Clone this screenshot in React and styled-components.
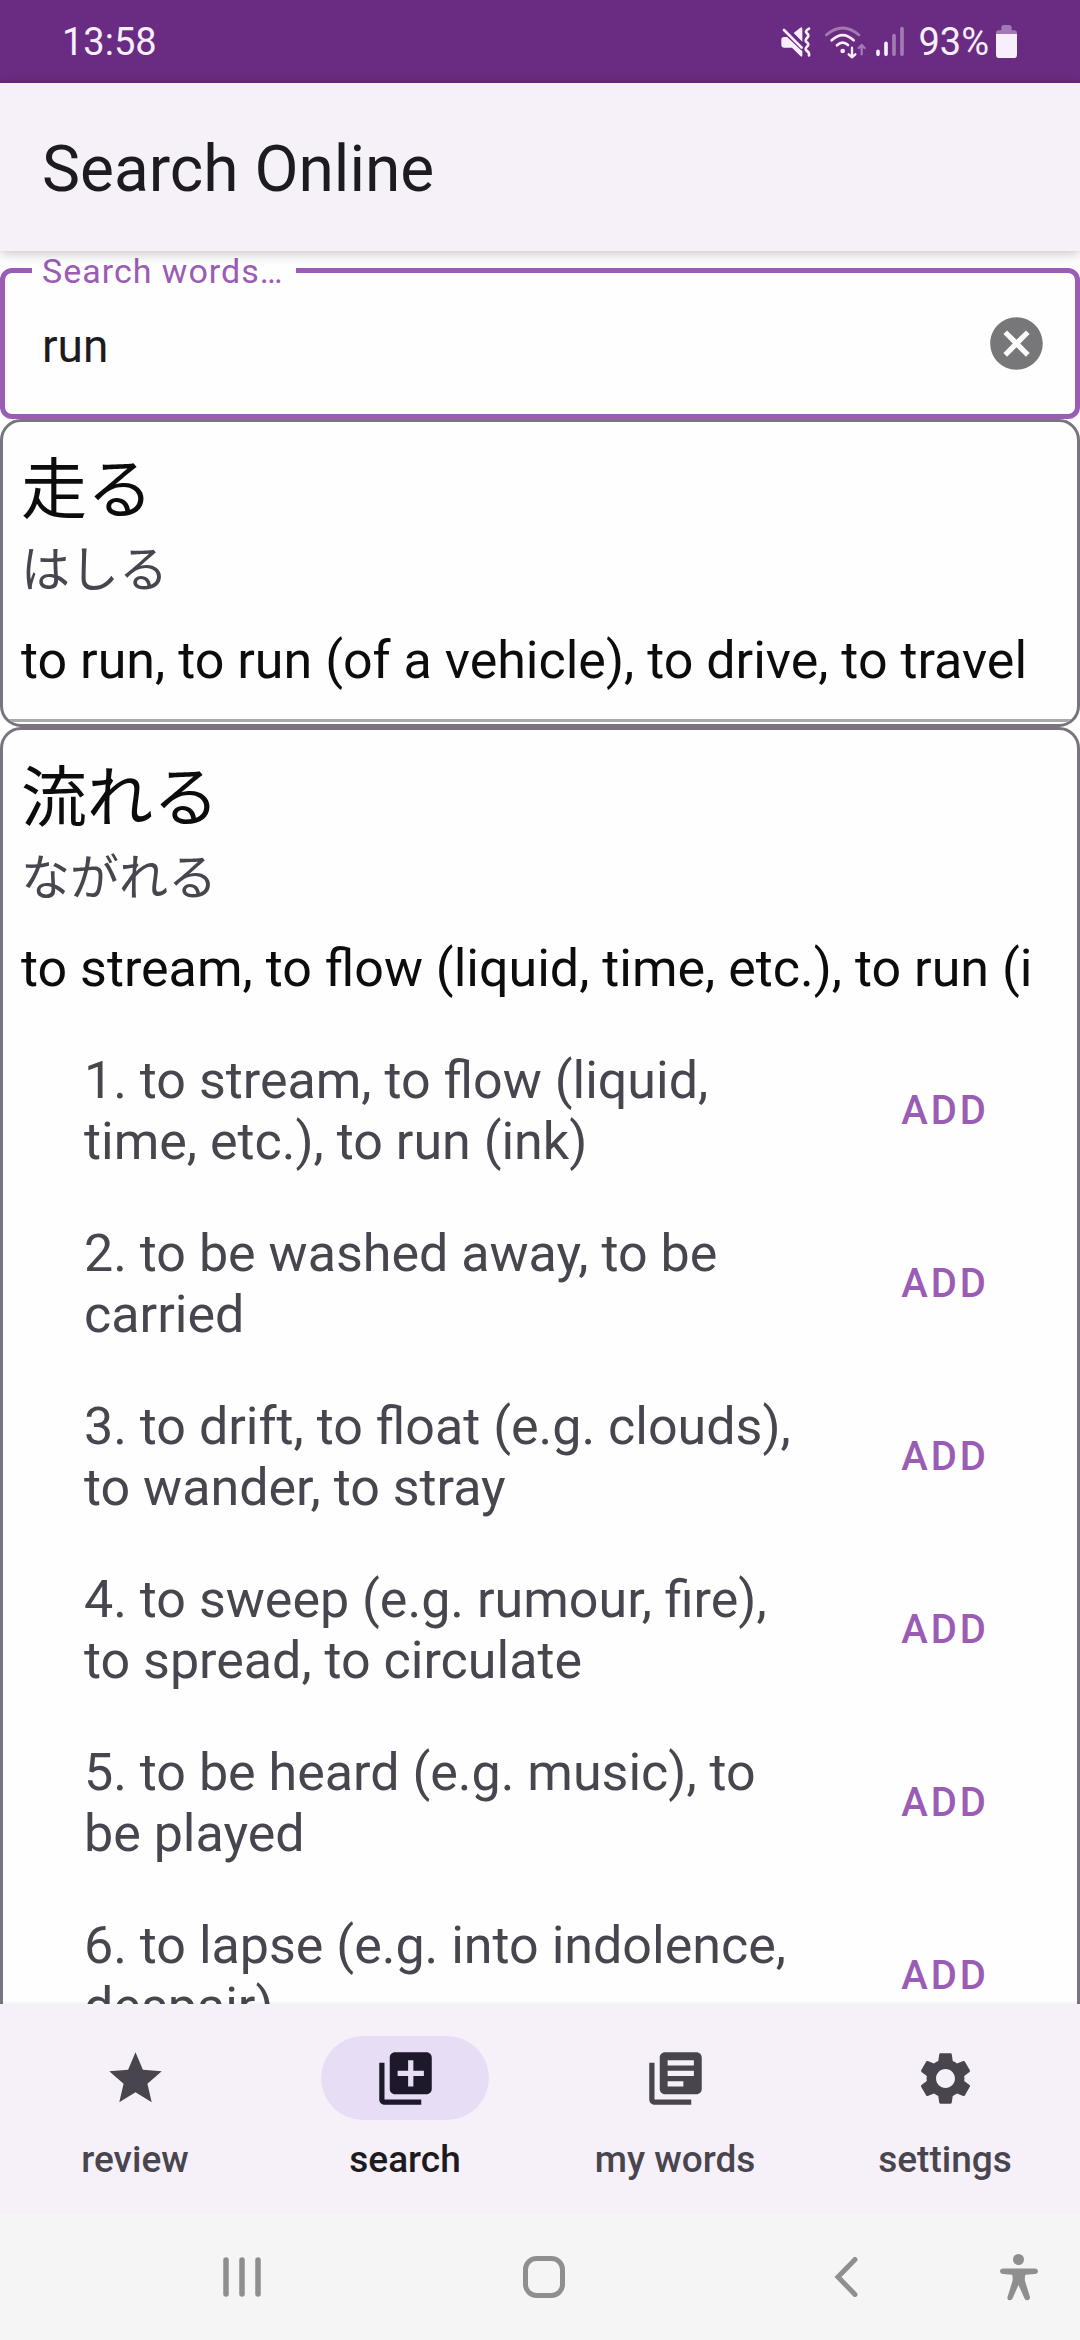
import React, { useState } from "react";
import styled, { createGlobalStyle } from "styled-components";
import {
  MdCancel,
  MdLibraryAdd,
  MdLibraryBooks,
  MdSettings,
  MdStar,
} from "react-icons/md";

const color = {
  status: "#6a2c82",
  statusText: "#f8eefc",
  accent: "#9a5cb4",
  bar: "#f6f1f9",
  pill: "#e7def6",
  pillIcon: "#1d192b",
  ink: "#1d1b20",
  word: "#0c0c0c",
  muted: "#49454f",
  outline: "#79747e",
  divider: "#a9a9a9",
  system: "#f5f5f5",
  systemIcon: "#8f8f8f",
};

const GlobalStyle = createGlobalStyle`
  *, *::before, *::after { box-sizing: border-box; }
  body {
    margin: 0;
    background: #fefefe;
    color: ${color.ink};
    font-family: Roboto, "Noto Sans CJK JP", sans-serif;
  }
  button, input { font: inherit; color: inherit; }
  button { border: 0; padding: 0; background: none; cursor: pointer; }
`;

const Screen = styled.div`
  display: flex;
  flex-direction: column;
  height: 100vh;
`;

const StatusBar = styled.div`
  flex: none;
  display: flex;
  align-items: center;
  justify-content: space-between;
  height: 83px;
  padding: 0 63px 0 62px;
  background: ${color.status};
  color: ${color.statusText};
  font-size: 38px;
  line-height: 48px;
`;

const StatusGroup = styled.div`
  display: flex;
  align-items: center;
  gap: ${(p) => p.$gap}px;
`;

const AppBar = styled.header`
  flex: none;
  position: relative;
  z-index: 1;
  display: flex;
  align-items: center;
  height: 168px;
  padding: 6px 42px 0;
  background: ${color.bar};
  box-shadow: 0 2px 12px rgba(0, 0, 0, 0.24);
`;

const Title = styled.h1`
  margin: 0;
  font-size: 64px;
  font-weight: 400;
  line-height: 76px;
`;

const Field = styled.fieldset`
  flex: none;
  min-width: 0;
  margin: 0;
  padding: 0 27px 16px;
  border: 5px solid ${color.accent};
  border-radius: 12px;
`;

const FieldLegend = styled.legend`
  padding: 2px 12px 0 10px;
  color: ${color.accent};
  font-size: 34px;
  line-height: 36px;
  letter-spacing: 1px;
`;

const FieldRow = styled.div`
  display: flex;
  align-items: center;
  height: 109px;
`;

const FieldInput = styled.input`
  flex: 1;
  min-width: 0;
  padding: 4px 10px 0;
  border: 0;
  outline: 0;
  background: none;
  font-size: 46px;
  line-height: 60px;
`;

const ClearButton = styled.button`
  display: flex;
  color: #777779;
  font-size: 63px;
`;

const Results = styled.main`
  flex: 1;
  min-height: 0;
  overflow: hidden auto;
  scrollbar-width: none;
`;

const Card = styled.article`
  padding: 20px 0 2px;
  border: 3px solid ${color.outline};
  border-radius: 21px;
  overflow: hidden;
`;

const CardHead = styled.div`
  padding: 0 30px 0 18px;
`;

const Word = styled.h2`
  margin: 0 0 10px;
  color: ${color.word};
  font-family: "Noto Sans CJK JP", sans-serif;
  font-size: 66px;
  font-weight: 400;
  line-height: 84px;
`;

const Reading = styled.p`
  margin: 0 0 34px;
  color: ${color.muted};
  font-family: "Noto Sans CJK JP", sans-serif;
  font-size: 49px;
  line-height: 60px;
`;

const Summary = styled.p`
  height: 61px;
  margin: 0;
  overflow: hidden;
  color: ${color.word};
  font-size: 52px;
  line-height: 61px;
  word-break: break-all;
`;

const Divider = styled.hr`
  height: 3px;
  margin: 28px 0 0;
  border: 0;
  background: ${color.divider};
`;

const Meanings = styled.ol`
  margin: 25px 0 0;
  padding: 0;
  list-style: none;
`;

const Meaning = styled.li`
  display: flex;
  align-items: center;
  min-height: 173px;
  padding: 0 4px 0 81px;
  color: ${color.muted};
  font-size: 52px;
  line-height: 61px;
`;

const MeaningText = styled.span`
  flex: 1;
`;

const AddButton = styled.button`
  width: 256px;
  height: 120px;
  color: ${color.accent};
  font-size: 40px;
  font-weight: 500;
  letter-spacing: 3px;
`;

const Tabs = styled.nav`
  flex: none;
  display: grid;
  grid-template-columns: repeat(4, 1fr);
  height: 210px;
  background: ${color.bar};
  box-shadow: 0 0 4px rgba(0, 0, 0, 0.1);
`;

const Tab = styled.a`
  display: flex;
  flex-direction: column;
  align-items: center;
  gap: 18px;
  padding-top: 32px;
  color: ${(p) => (p.$active ? color.ink : color.muted)};
  font-size: 37px;
  font-weight: 500;
  line-height: 44px;
  text-decoration: none;
`;

const TabIcon = styled.span`
  display: flex;
  align-items: center;
  justify-content: center;
  width: 168px;
  height: 84px;
  border-radius: 42px;
  background: ${(p) => (p.$active ? color.pill : "transparent")};
  color: ${(p) => (p.$active ? color.pillIcon : "inherit")};
  font-size: 63px;
`;

const SystemBar = styled.div`
  flex: none;
  display: flex;
  align-items: center;
  height: 126px;
  padding: 0 39px 0 91px;
  background: ${color.system};
  color: ${color.systemIcon};
`;

const SystemButton = styled.button`
  display: flex;
  justify-content: center;
  flex: ${(p) => (p.$narrow ? "0 0 44px" : "1")};
`;

const MuteIcon = () => (
  <svg width="30" height="30" viewBox="0 0 90 90" aria-hidden="true">
    <path
      d="M4 30h14L64 72V84q0 8-6 3L33 62H10q-9 0-9-9V38q0-8 8-8zM38 18 58 2q6-3 6 4v38z"
      fill="currentColor"
    />
    <path d="M7 6 64 63" stroke={color.status} strokeWidth="14" />
    <path d="M9 9 62 62" stroke="currentColor" strokeWidth="8" strokeLinecap="round" />
    <path
      d="M84 5Q70 13 78 19T78 33 78 46 78 59 78 72 84 85"
      fill="none"
      stroke="currentColor"
      strokeWidth="8"
      strokeLinecap="round"
      strokeLinejoin="round"
    />
  </svg>
);

const WifiIcon = () => (
  <svg width="42" height="34" viewBox="0 0 126 102" aria-hidden="true">
    <g fill="none" stroke="currentColor" strokeLinecap="round" strokeLinejoin="round">
      <path d="M4 30Q53-12 102 30" strokeWidth="8" opacity="0.4" />
      <path d="M20 46Q53 15 86 46" strokeWidth="8" />
      <path d="M36 61Q53 45 69 60" strokeWidth="8" />
      <path d="M81 68v29M71 88l10 9 10-9" strokeWidth="7" />
      <path d="M110 88V60M101 69l9-9 9 9" strokeWidth="7" opacity="0.4" />
    </g>
    <circle cx="53" cy="78" r="7" fill="currentColor" />
  </svg>
);

const SignalIcon = () => (
  <svg width="28" height="31" viewBox="0 0 84 93" aria-hidden="true">
    <g stroke="currentColor" strokeWidth="11" strokeLinecap="round">
      <path d="M6 76v9M30 52v33" />
      <path d="M54 29v56M78 8v77" opacity="0.4" />
    </g>
  </svg>
);

const BatteryIcon = () => (
  <svg width="21" height="33" viewBox="0 0 63 99" aria-hidden="true">
    <path
      d="M0 27V24q0-8 8-8h8V8q0-8 8-8h15q8 0 8 8v8h8q8 0 8 8v3z"
      fill="currentColor"
      opacity="0.4"
    />
    <path d="M0 27h63v62q0 10-10 10H10Q0 99 0 89z" fill="currentColor" />
  </svg>
);

const RecentsIcon = () => (
  <svg width="38" height="40" viewBox="0 0 38 40" aria-hidden="true">
    <path
      d="M3 3v34M19 3v34M35 3v34"
      stroke="currentColor"
      strokeWidth="5.5"
      strokeLinecap="round"
    />
  </svg>
);

const HomeIcon = () => (
  <svg width="42" height="42" viewBox="0 0 42 42" aria-hidden="true">
    <rect
      x="2.5"
      y="2.5"
      width="37"
      height="37"
      rx="11"
      fill="none"
      stroke="currentColor"
      strokeWidth="5"
    />
  </svg>
);

const BackIcon = () => (
  <svg width="24" height="40" viewBox="0 0 24 40" aria-hidden="true">
    <path
      d="M21 2.5 4 20l17 17.5"
      fill="none"
      stroke="currentColor"
      strokeWidth="5"
      strokeLinecap="round"
    />
  </svg>
);

const AccessibilityIcon = () => (
  <svg width="38" height="47" viewBox="0 0 38 47" aria-hidden="true">
    <circle cx="18.5" cy="5.5" r="5.5" fill="currentColor" />
    <path
      d="M3 14.5H35Q38 15 38 17.3 38 19.6 35 20L25.5 20.7Q24.500 22 25 27L30 43Q30 46 27.500 46.300 25.300 46.500 24.500 44.500L18.500 31 12.500 44.500Q11.700 46.500 9.500 46.300 7 46 7.500 43L12.500 27Q13 22 12 20.700L3 20Q0 19.600 0 17.300 0 15 3 14.500z"
      fill="currentColor"
    />
  </svg>
);

const entries = [
  {
    word: "走る",
    reading: "はしる",
    summary: "to run, to run (of a vehicle), to drive, to travel",
    meanings: [],
  },
  {
    word: "流れる",
    reading: "ながれる",
    summary: "to stream, to flow (liquid, time, etc.), to run (ink)",
    meanings: [
      "to stream, to flow (liquid, time, etc.), to run (ink)",
      "to be washed away, to be carried",
      "to drift, to float (e.g. clouds), to wander, to stray",
      "to sweep (e.g. rumour, fire), to spread, to circulate",
      "to be heard (e.g. music), to be played",
      "to lapse (e.g. into indolence, despair)",
    ],
  },
];

const tabs = [
  { id: "review", label: "review", Icon: MdStar },
  { id: "search", label: "search", Icon: MdLibraryAdd },
  { id: "words", label: "my words", Icon: MdLibraryBooks },
  { id: "settings", label: "settings", Icon: MdSettings },
];

function Entry({ word, reading, summary, meanings }) {
  return (
    <Card>
      <CardHead>
        <Word lang="ja">{word}</Word>
        <Reading lang="ja">{reading}</Reading>
        <Summary>{summary}</Summary>
      </CardHead>
      {meanings.length > 0 ? (
        <Meanings>
          {meanings.map((text, i) => (
            <Meaning key={text}>
              <MeaningText>{`${i + 1}. ${text}`}</MeaningText>
              <AddButton type="button">ADD</AddButton>
            </Meaning>
          ))}
        </Meanings>
      ) : (
        <Divider />
      )}
    </Card>
  );
}

export default function App() {
  const [query, setQuery] = useState("run");
  return (
    <Screen>
      <GlobalStyle />
      <StatusBar>
        <span>13:58</span>
        <StatusGroup $gap={7}>
          <StatusGroup $gap={14}>
            <MuteIcon />
            <StatusGroup $gap={9}>
              <WifiIcon />
              <SignalIcon />
            </StatusGroup>
            <span>93%</span>
          </StatusGroup>
          <BatteryIcon />
        </StatusGroup>
      </StatusBar>
      <AppBar>
        <Title>Search Online</Title>
      </AppBar>
      <Field>
        <FieldLegend>
          <label htmlFor="query">Search words…</label>
        </FieldLegend>
        <FieldRow>
          <FieldInput
            id="query"
            type="text"
            value={query}
            onChange={(e) => setQuery(e.target.value)}
          />
          <ClearButton type="button" aria-label="Clear" onClick={() => setQuery("")}>
            <MdCancel />
          </ClearButton>
        </FieldRow>
      </Field>
      <Results>
        {entries.map((entry) => (
          <Entry key={entry.word} {...entry} />
        ))}
      </Results>
      <Tabs>
        {tabs.map(({ id, label, Icon }) => (
          <Tab key={id} href={`#${id}`} $active={id === "search"}>
            <TabIcon $active={id === "search"}>
              <Icon />
            </TabIcon>
            {label}
          </Tab>
        ))}
      </Tabs>
      <SystemBar>
        <SystemButton type="button" aria-label="Recent apps">
          <RecentsIcon />
        </SystemButton>
        <SystemButton type="button" aria-label="Home">
          <HomeIcon />
        </SystemButton>
        <SystemButton type="button" aria-label="Back">
          <BackIcon />
        </SystemButton>
        <SystemButton type="button" aria-label="Accessibility" $narrow>
          <AccessibilityIcon />
        </SystemButton>
      </SystemBar>
    </Screen>
  );
}
